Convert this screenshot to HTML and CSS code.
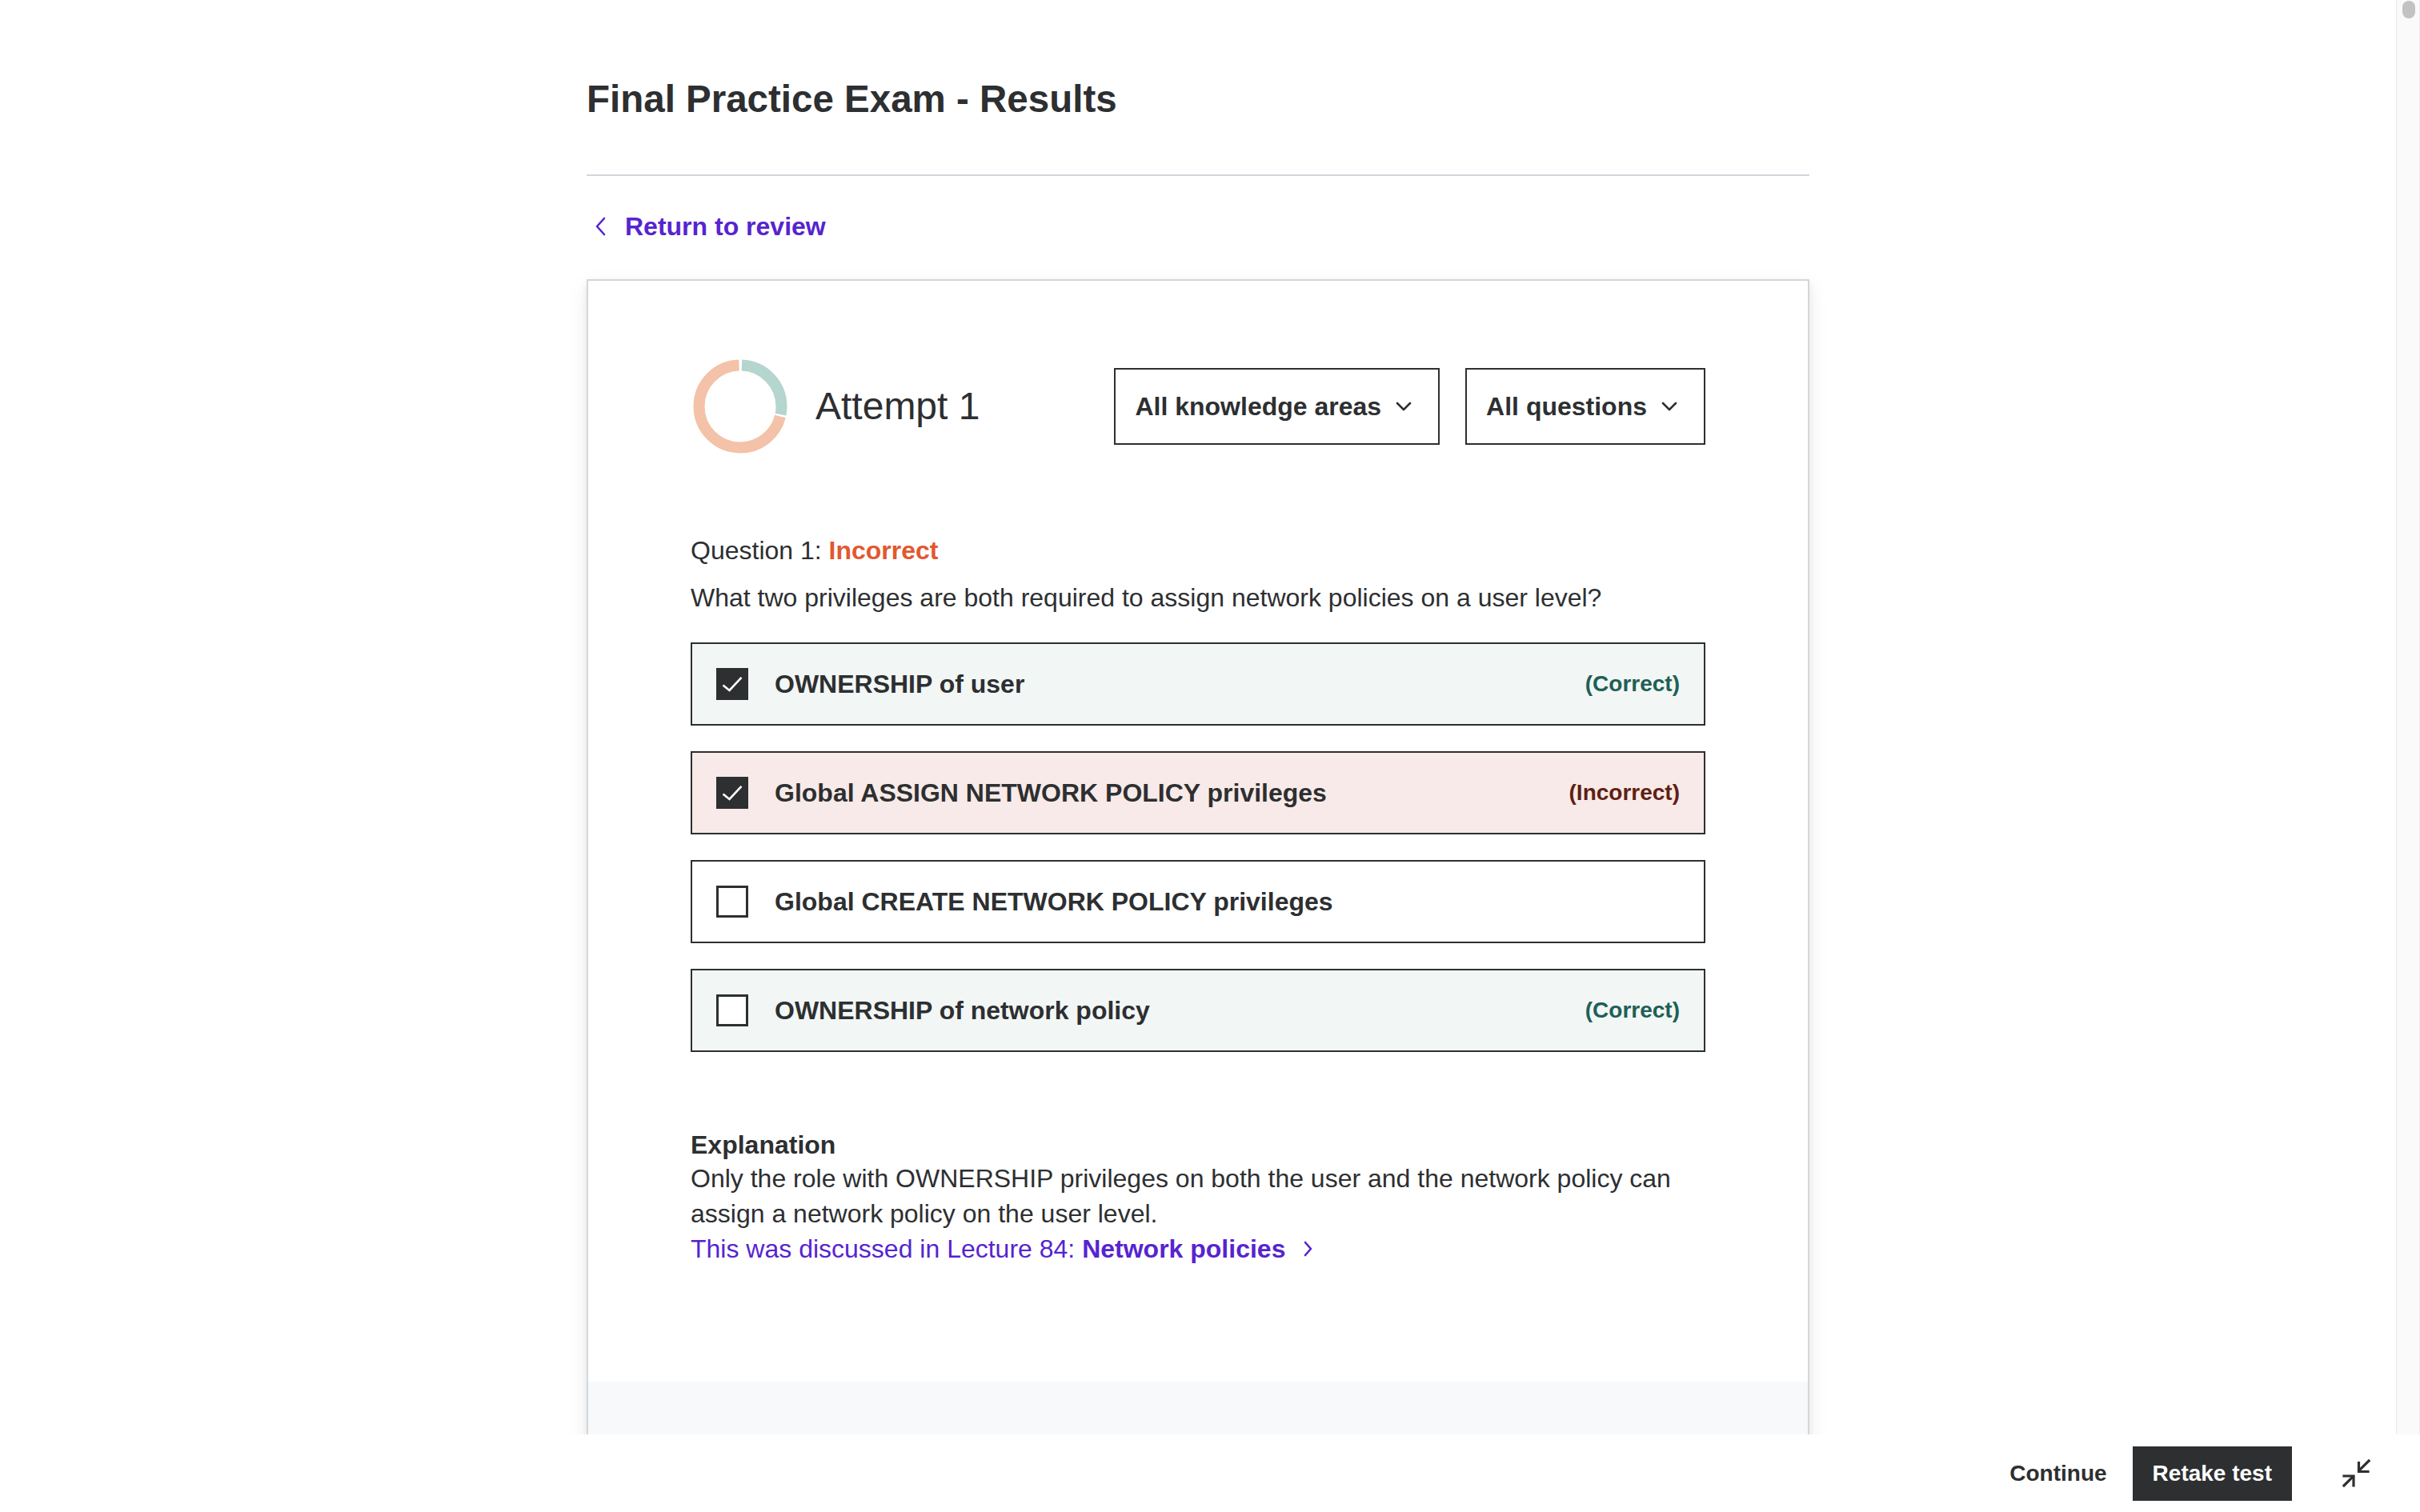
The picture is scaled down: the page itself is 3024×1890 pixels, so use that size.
FILE: index.html
```html
<!DOCTYPE html>
<html lang="en">
<head>
<meta charset="utf-8">
<title>Final Practice Exam - Results</title>
<link rel="stylesheet" href="styles.css">
</head>
<body>
<div class="app">
  <div class="main">
    <div class="scroll-area">
      <div class="page">
        <h1 class="title">Final Practice Exam - Results</h1>
        <div class="divider"></div>
        <a class="back-link" href="#">
          <svg class="back-icon" width="32" height="32" viewBox="0 0 32 32"><path d="M22 6 L13 16 L22 26" fill="none" stroke="currentColor" stroke-width="2.6" stroke-linecap="round" stroke-linejoin="round"/></svg>
          <span>Return to review</span>
        </a>
        <section class="card">
          <div class="card-body">
            <div class="attempt-row">
              <div class="attempt-left">
                <svg class="donut" width="118" height="118" viewBox="0 0 118 118">
                  <g transform="rotate(-90 59 59)">
                    <circle cx="59" cy="59" r="51.5" fill="none" stroke="#b5d5cf" stroke-width="14" stroke-dasharray="89 234.6" stroke-dashoffset="-2"/>
                    <circle cx="59" cy="59" r="51.5" fill="none" stroke="#f3c2a8" stroke-width="14" stroke-dasharray="228 95.6" stroke-dashoffset="-93.5"/>
                  </g>
                </svg>
                <span class="attempt-title">Attempt 1</span>
              </div>
              <div class="filters">
                <button class="dropdown"><span>All knowledge areas</span><svg width="32" height="32" viewBox="0 0 32 32"><path d="M8 12 L16 20 L24 12" fill="none" stroke="currentColor" stroke-width="2.6" stroke-linecap="round" stroke-linejoin="round"/></svg></button>
                <button class="dropdown"><span>All questions</span><svg width="32" height="32" viewBox="0 0 32 32"><path d="M8 12 L16 20 L24 12" fill="none" stroke="currentColor" stroke-width="2.6" stroke-linecap="round" stroke-linejoin="round"/></svg></button>
              </div>
            </div>

            <div class="question-status">Question 1: <strong class="status-incorrect">Incorrect</strong></div>
            <div class="question-text">What two privileges are both required to assign network policies on a user level?</div>

            <div class="options">
              <div class="option option-correct">
                <span class="checkbox checked"><svg width="40" height="40" viewBox="0 0 40 40"><path d="M8.5 21.5 L16.5 28 L31.5 11.8" fill="none" stroke="#fff" stroke-width="2.6"/></svg></span>
                <span class="option-text">OWNERSHIP of user</span>
                <span class="option-tag tag-correct">(Correct)</span>
              </div>
              <div class="option option-incorrect">
                <span class="checkbox checked"><svg width="40" height="40" viewBox="0 0 40 40"><path d="M8.5 21.5 L16.5 28 L31.5 11.8" fill="none" stroke="#fff" stroke-width="2.6"/></svg></span>
                <span class="option-text">Global ASSIGN NETWORK POLICY privileges</span>
                <span class="option-tag tag-incorrect">(Incorrect)</span>
              </div>
              <div class="option">
                <span class="checkbox"></span>
                <span class="option-text">Global CREATE NETWORK POLICY privileges</span>
              </div>
              <div class="option option-correct">
                <span class="checkbox"></span>
                <span class="option-text">OWNERSHIP of network policy</span>
                <span class="option-tag tag-correct">(Correct)</span>
              </div>
            </div>

            <div class="explanation">
              <div class="explanation-title">Explanation</div>
              <p class="explanation-text">Only the role with OWNERSHIP privileges on both the user and the network policy can assign a network policy on the user level.</p>
              <a class="lecture-link" href="#">This was discussed in Lecture 84: <strong>Network policies</strong><svg class="link-icon" width="32" height="32" viewBox="0 0 32 32"><path d="M13 8 L20 16 L13 24" fill="none" stroke="currentColor" stroke-width="2.6" stroke-linecap="round" stroke-linejoin="round"/></svg></a>
            </div>
          </div>
          <div class="card-band"></div>
        </section>
      </div>
    </div>
    <div class="scrollbar"><div class="scroll-thumb"></div></div>
  </div>
  <footer class="footer">
    <button class="btn-text">Continue</button>
    <button class="btn-dark">Retake test</button>
    <svg class="collapse-icon" width="36" height="36" viewBox="0 0 36 36" fill="none" stroke="#2d2f31" stroke-width="3.2" stroke-linecap="square">
      <path d="M34 2 L22 14"/>
      <path d="M21.5 4.5 V15.5 H33"/>
      <path d="M3 33 L14 22"/>
      <path d="M3 21 H15 V33"/>
    </svg>
  </footer>
</div>
</body>
</html>
```

FILE: styles.css
```css
* {
  box-sizing: border-box;
}

html, body {
  margin: 0;
  padding: 0;
  background: #ffffff;
}

body {
  font-family: "Liberation Sans", Arial, sans-serif;
  color: #2d2f31;
  overflow: hidden;
}

.app {
  display: flex;
  flex-direction: column;
  height: 1890px;
}

.main {
  display: flex;
  height: 1793px;
  overflow: hidden;
}

.scroll-area {
  flex: 1;
  overflow: hidden;
}

.page {
  width: 1528px;
  margin: 0 auto;
  padding-top: 94px;
}

.title {
  margin: 0;
  font-size: 47.5px;
  line-height: 60px;
  font-weight: 700;
  color: #2d2f31;
}

.divider {
  margin-top: 64px;
  height: 2px;
  background: #d1d7dc;
}

.back-link {
  margin-top: 41px;
  display: flex;
  align-items: center;
  gap: 16px;
  height: 44px;
  font-size: 32px;
  line-height: 44px;
  font-weight: 700;
  color: #5624d0;
  text-decoration: none;
}

.back-icon {
  flex: none;
}

.card {
  margin-top: 44px;
  border: 2px solid #d1d7dc;
  box-shadow: 0 4px 8px rgba(0, 0, 0, 0.06), 0 8px 24px rgba(0, 0, 0, 0.08);
  background: #ffffff;
}

.card-body {
  padding: 98px 128px 144px;
}

.card-band {
  height: 320px;
  background: #f7f9fa;
}

.attempt-row {
  display: flex;
  align-items: center;
  justify-content: space-between;
  height: 118px;
}

.attempt-left {
  display: flex;
  align-items: center;
  gap: 35px;
  padding-left: 3px;
}

.donut {
  display: block;
  flex: none;
}

.attempt-title {
  font-size: 48px;
  line-height: 60px;
  font-weight: 400;
}

.filters {
  display: flex;
  gap: 32px;
}

.dropdown {
  display: flex;
  align-items: center;
  gap: 12px;
  height: 96px;
  padding: 0 27px 0 24px;
  border: 2px solid #2d2f31;
  background: #ffffff;
  color: #2d2f31;
  font-family: "Liberation Sans", Arial, sans-serif;
  font-size: 32px;
  font-weight: 700;
}

.question-status {
  margin-top: 99px;
  font-size: 32px;
  line-height: 44px;
}

.status-incorrect {
  color: #e2582f;
  font-weight: 700;
}

.question-text {
  margin-top: 15px;
  font-size: 32px;
  line-height: 44px;
}

.options {
  margin-top: 34px;
  display: flex;
  flex-direction: column;
  gap: 32px;
}

.option {
  display: flex;
  align-items: center;
  height: 104px;
  padding: 0 30px;
  border: 2px solid #2d2f31;
  background: #ffffff;
}

.option-correct {
  background: #f2f6f5;
}

.option-incorrect {
  background: #f8eae8;
}

.checkbox {
  flex: none;
  width: 40px;
  height: 40px;
  border: 3px solid #2d2f31;
  background: #ffffff;
  margin-right: 33px;
}

.checkbox.checked {
  border: none;
  background: #2d2f31;
}

.checkbox svg {
  display: block;
}

.option-text {
  flex: 1;
  font-size: 32px;
  font-weight: 700;
  line-height: 44px;
}

.option-tag {
  font-size: 28px;
  font-weight: 700;
  line-height: 40px;
}

.tag-correct {
  color: #1e6055;
}

.tag-incorrect {
  color: #5f1f14;
}

.explanation {
  margin-top: 96px;
  font-size: 32px;
  line-height: 44px;
}

.explanation-title {
  font-weight: 700;
  line-height: 40px;
}

.explanation-text {
  margin: 0;
}

.lecture-link {
  display: inline-flex;
  align-items: center;
  color: #5624d0;
  text-decoration: none;
  white-space: pre;
}

.lecture-link strong {
  font-weight: 700;
}

.link-icon {
  margin-left: 12px;
}

.scrollbar {
  flex: none;
  width: 30px;
  height: 100%;
  background: #fafafa;
  border-left: 1px solid #e8e8e8;
  border-right: 1px solid #ececec;
  padding: 1px 0 0 7px;
}

.scroll-thumb {
  width: 16px;
  height: 22px;
  border-radius: 8px;
  background: #c2c2c2;
}

.footer {
  flex: none;
  height: 97px;
  display: flex;
  align-items: center;
  justify-content: flex-end;
  padding-right: 62px;
  background: #ffffff;
}

.btn-text {
  margin-right: 32px;
  padding: 0;
  border: none;
  background: none;
  color: #2d2f31;
  font-family: "Liberation Sans", Arial, sans-serif;
  font-size: 28px;
  font-weight: 700;
}

.btn-dark {
  height: 68px;
  padding: 0 25px;
  border: none;
  background: #2d2f31;
  color: #ffffff;
  font-family: "Liberation Sans", Arial, sans-serif;
  font-size: 28px;
  font-weight: 700;
}

.collapse-icon {
  margin-left: 62px;
  flex: none;
}
```
